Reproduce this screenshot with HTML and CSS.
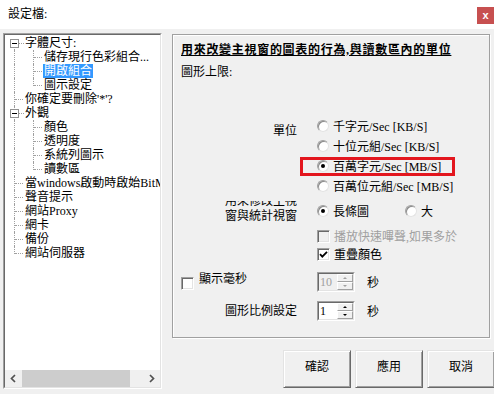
FILE: index.html
```html
<!DOCTYPE html>
<html lang="zh-Hant">
<head>
    <meta charset="UTF-8">
    <title>設定檔</title>
    <link rel="stylesheet" href="styles.css">
</head>
<body>
    <div class="titlebar">
        <span class="title">設定檔:</span>
        <span class="close">x</span>
    </div>

    <div class="main">
        <!-- tree on the left -->
        <div class="tree">
            <div class="tree-in">
                <div class="tree-items">
                    <div class="row"><span class="g xf"><i class="box"></i></span><span class="lbl">字體尺寸:</span></div>
                    <div class="row"><span class="g v"></span><span class="g t"></span><span class="lbl">儲存現行色彩組合...</span></div>
                    <div class="row"><span class="g v"></span><span class="g t"></span><span class="lbl sel">開啟組合</span></div>
                    <div class="row"><span class="g v"></span><span class="g e"></span><span class="lbl">圖示設定</span></div>
                    <div class="row"><span class="g t"></span><span class="lbl">你確定要刪除'*'?</span></div>
                    <div class="row"><span class="g x"><i class="box"></i></span><span class="lbl">外觀</span></div>
                    <div class="row"><span class="g v"></span><span class="g t"></span><span class="lbl">顏色</span></div>
                    <div class="row"><span class="g v"></span><span class="g t"></span><span class="lbl">透明度</span></div>
                    <div class="row"><span class="g v"></span><span class="g t"></span><span class="lbl">系統列圖示</span></div>
                    <div class="row"><span class="g v"></span><span class="g e"></span><span class="lbl">讀數區</span></div>
                    <div class="row"><span class="g t"></span><span class="lbl">當windows啟動時啟始BitM</span></div>
                    <div class="row"><span class="g t"></span><span class="lbl">聲音提示</span></div>
                    <div class="row"><span class="g t"></span><span class="lbl">網站Proxy</span></div>
                    <div class="row"><span class="g t"></span><span class="lbl">網卡</span></div>
                    <div class="row"><span class="g t"></span><span class="lbl">備份</span></div>
                    <div class="row"><span class="g e"></span><span class="lbl">網站伺服器</span></div>
                </div>
                <div class="hscroll">
                    <span class="arrow"><svg width="17" height="17" viewBox="0 0 17 17"><path d="M10 5 L6.5 8.5 L10 12" fill="none" stroke="#505050" stroke-width="1.7"/></svg></span>
                    <span class="thumb"></span>
                    <span class="track"></span>
                    <span class="arrow"><svg width="17" height="17" viewBox="0 0 17 17"><path d="M7 5 L10.5 8.5 L7 12" fill="none" stroke="#505050" stroke-width="1.7"/></svg></span>
                </div>
            </div>
        </div>

        <div class="right">
            <div class="group">
                <div class="heading">用來改變主視窗的圖表的行為,與讀數區內的單位</div>
                <div class="sub">圖形上限:</div>

                <div class="form">
                    <div class="unit-label">單位</div>
                    <div class="opts">
                        <div class="opt"><span class="radio"></span>千字元/Sec [KB/S]</div>
                        <div class="opt"><span class="radio"></span>十位元組/Sec [KB/S]</div>
                        <div class="opt marked"><span class="radio on"></span>百萬字元/Sec [MB/S]</div>
                        <div class="opt"><span class="radio"></span>百萬位元組/Sec [MB/S]</div>
                    </div>

                    <div class="clip-label"><span>用來修改主視<br>窗與統計視窗</span></div>
                    <div class="opt">
                        <span class="radio on"></span>長條圖
                        <span class="radio second"></span>大
                    </div>

                    <div></div>
                    <div class="opt off-text"><span class="check off"></span>播放快速嗶聲,如果多於</div>

                    <div></div>
                    <div class="opt">
                        <span class="check"><svg width="11" height="11" viewBox="0 0 11 11"><path d="M2 5.2 L4.3 7.6 L9 2.8" fill="none" stroke="#000" stroke-width="1.8"/></svg></span>重疊顏色
                    </div>

                    <div class="ms"><span class="check"></span><span>顯示毫秒</span></div>
                    <div class="spin-row">
                        <span class="spin disabled">
                            <span class="spin-in">
                                <span class="spin-val">10</span>
                                <span class="spin-btns"><span class="up"></span><span class="dn"></span></span>
                            </span>
                        </span>
                        <span>秒</span>
                    </div>

                    <div class="scale-label">圖形比例設定</div>
                    <div class="spin-row">
                        <span class="spin">
                            <span class="spin-in">
                                <span class="spin-val">1</span>
                                <span class="spin-btns"><span class="up"></span><span class="dn"></span></span>
                            </span>
                        </span>
                        <span>秒</span>
                    </div>
                </div>
            </div>

            <div class="buttons">
                <div class="btn">確認</div>
                <div class="btn">應用</div>
                <div class="btn">取消</div>
            </div>
        </div>
    </div>
</body>
</html>
```

FILE: styles.css
```css
* {
    box-sizing: border-box;
}

body {
    margin: 0;
    width: 494px;
    height: 394px;
    overflow: hidden;
    background-color: #f0f0f0;
    font-family: "Liberation Serif", "Noto Sans CJK TC", serif;
    font-size: 12px;
    color: #000;
}

/* title bar */
.titlebar {
    height: 29px;
    background-color: #fff;
    display: flex;
    justify-content: space-between;
    align-items: flex-start;
}

.title {
    padding: 7px 0 0 8px;
    line-height: 14px;
}

.close {
    margin-top: 7px;
    width: 17px;
    height: 17px;
    background-color: #c75050;
    color: #fff;
    font: bold 11px "Liberation Sans", sans-serif;
    display: flex;
    align-items: center;
    justify-content: center;
    padding-bottom: 2px;
}

.main {
    display: flex;
    padding: 4px 0 0 3px;
}

/* tree */
.tree {
    width: 159px;
    height: 356px;
    border: 1px solid;
    border-color: #a0a0a0 #fff #fff #a0a0a0;
    flex: none;
}

.tree-in {
    height: 100%;
    border: 1px solid;
    border-color: #696969 #e3e3e3 #e3e3e3 #696969;
    background-color: #fff;
    display: flex;
    flex-direction: column;
}

.tree-items {
    flex: 1;
    padding-top: 1px;
    overflow: hidden;
}

.row {
    display: flex;
    height: 14px;
    line-height: 14px;
    white-space: nowrap;
}

.lbl {
    padding: 0 1px;
}

.sel {
    background-color: #3399ff;
    color: #fff;
}

.g {
    position: relative;
    width: 19px;
    height: 14px;
    flex: none;
}

.g::before,
.g::after {
    content: "";
    position: absolute;
}

.v::before,
.t::before,
.x::before {
    left: 9px;
    top: 0;
    bottom: 0;
    border-left: 1px dotted #a0a0a0;
}

.xf::before {
    left: 9px;
    top: 7px;
    bottom: 0;
    border-left: 1px dotted #a0a0a0;
}

.e::before {
    left: 9px;
    top: 0;
    height: 8px;
    border-left: 1px dotted #a0a0a0;
}

.t::after,
.e::after {
    left: 10px;
    top: 7px;
    width: 8px;
    border-top: 1px dotted #a0a0a0;
}

.x::after,
.xf::after {
    left: 14px;
    top: 7px;
    width: 5px;
    border-top: 1px dotted #a0a0a0;
}

.box {
    position: absolute;
    left: 5px;
    top: 3px;
    width: 9px;
    height: 9px;
    border: 1px solid #919191;
    background-color: #fff;
}

.box::after {
    content: "";
    position: absolute;
    left: 1px;
    top: 3px;
    width: 5px;
    height: 1px;
    background-color: #000;
}

.hscroll {
    display: flex;
    height: 17px;
    background-color: #f0f0f0;
    flex: none;
}

.arrow {
    width: 17px;
    height: 17px;
    flex: none;
}

.thumb {
    width: 108px;
    background-color: #cdcdcd;
}

.track {
    flex: 1;
}

/* right side */
.right {
    margin-left: 10px;
    width: 318px;
}

.group {
    width: 318px;
    height: 304px;
    margin-top: 1px;
    border: 1px solid #a0a0a0;
    box-shadow: inset 1px 1px 0 #fff, 1px 1px 0 #fff;
    padding: 8px 0 0 8px;
}

.heading {
    font-weight: bold;
    text-decoration: underline;
    line-height: 14px;
    letter-spacing: 0.7px;
    white-space: nowrap;
}

.sub {
    margin-top: 8px;
    line-height: 14px;
}

.form {
    margin-top: 37px;
    display: grid;
    grid-template-columns: 116px auto;
    grid-template-rows: 80px 30px 18px 18px 30px 29px;
    column-gap: 20px;
}

.unit-label {
    text-align: right;
    padding-top: 8px;
    line-height: 14px;
}

.opts {
    display: flex;
    flex-direction: column;
}

.opt {
    display: flex;
    align-items: center;
    gap: 4px;
    min-height: 20px;
    white-space: nowrap;
}

.marked {
    position: relative;
}

.marked::after {
    content: "";
    position: absolute;
    left: -17px;
    top: 1px;
    bottom: 0;
    width: 149px;
    border: 3px solid #e3161e;
}

.clip-label {
    align-self: end;
    height: 23px;
    margin-bottom: 2px;
    overflow: hidden;
    display: flex;
    flex-direction: column;
    justify-content: flex-end;
    text-align: right;
    line-height: 15px;
}

.radio {
    width: 12px;
    height: 12px;
    flex: none;
    border-radius: 50%;
    background-color: #fff;
    border: 1px solid;
    border-color: #a0a0a0 #e3e3e3 #e3e3e3 #a0a0a0;
    box-shadow: inset 1px 1px 0 #8a8a8a;
    display: flex;
    align-items: center;
    justify-content: center;
}

.radio.on::after {
    content: "";
    width: 4px;
    height: 4px;
    border-radius: 50%;
    background-color: #000;
}

.radio.second {
    margin-left: 32px;
}

.check {
    width: 13px;
    height: 13px;
    flex: none;
    background-color: #fff;
    border: 1px solid;
    border-color: #a0a0a0 #fff #fff #a0a0a0;
    box-shadow: inset 1px 1px 0 #696969, inset -1px -1px 0 #e3e3e3;
    display: flex;
    align-items: center;
    justify-content: center;
}

.check.off {
    background-color: #f0f0f0;
}

.off-text {
    color: #a0a0a0;
}

.ms {
    align-self: end;
    height: 20px;
    display: flex;
    align-items: flex-start;
    gap: 5px;
    line-height: 14px;
}

.ms .check {
    margin-top: 5px;
}

.scale-label {
    align-self: end;
    text-align: right;
    line-height: 20px;
}

.spin-row {
    align-self: end;
    display: flex;
    align-items: center;
    gap: 12px;
}

.spin {
    width: 38px;
    height: 20px;
    border: 1px solid;
    border-color: #a0a0a0 #fff #fff #a0a0a0;
}

.spin-in {
    height: 100%;
    display: flex;
    border: 1px solid;
    border-color: #696969 #e3e3e3 #e3e3e3 #696969;
    background-color: #fff;
}

.spin-val {
    flex: 1;
    padding-left: 1px;
    line-height: 16px;
}

.spin.disabled .spin-val {
    color: #a0a0a0;
    background-color: #f0f0f0;
}

.spin-btns {
    width: 16px;
    display: flex;
    flex-direction: column;
}

.up,
.dn {
    flex: 1;
    background-color: #f0f0f0;
    border: 1px solid;
    border-color: #fff #a0a0a0 #a0a0a0 #fff;
    display: flex;
    align-items: center;
    justify-content: center;
}

.up::after,
.dn::after {
    content: "";
    border-left: 2px solid transparent;
    border-right: 2px solid transparent;
}

.up::after {
    border-bottom: 2px solid #000;
}

.dn::after {
    border-top: 2px solid #000;
}

.spin.disabled .up::after {
    border-bottom-color: #a0a0a0;
}

.spin.disabled .dn::after {
    border-top-color: #a0a0a0;
}

/* dialog buttons */
.buttons {
    display: flex;
    justify-content: flex-end;
    gap: 4px;
    margin-top: 12px;
    margin-right: -5px;
}

.btn {
    width: 68px;
    height: 38px;
    background-color: #f0f0f0;
    border: 1px solid;
    border-color: #e3e3e3 #696969 #696969 #e3e3e3;
    box-shadow: inset 1px 1px 0 #fff, inset -1px -1px 0 #a0a0a0;
    display: flex;
    align-items: center;
    justify-content: center;
    padding-bottom: 6px;
}
```
